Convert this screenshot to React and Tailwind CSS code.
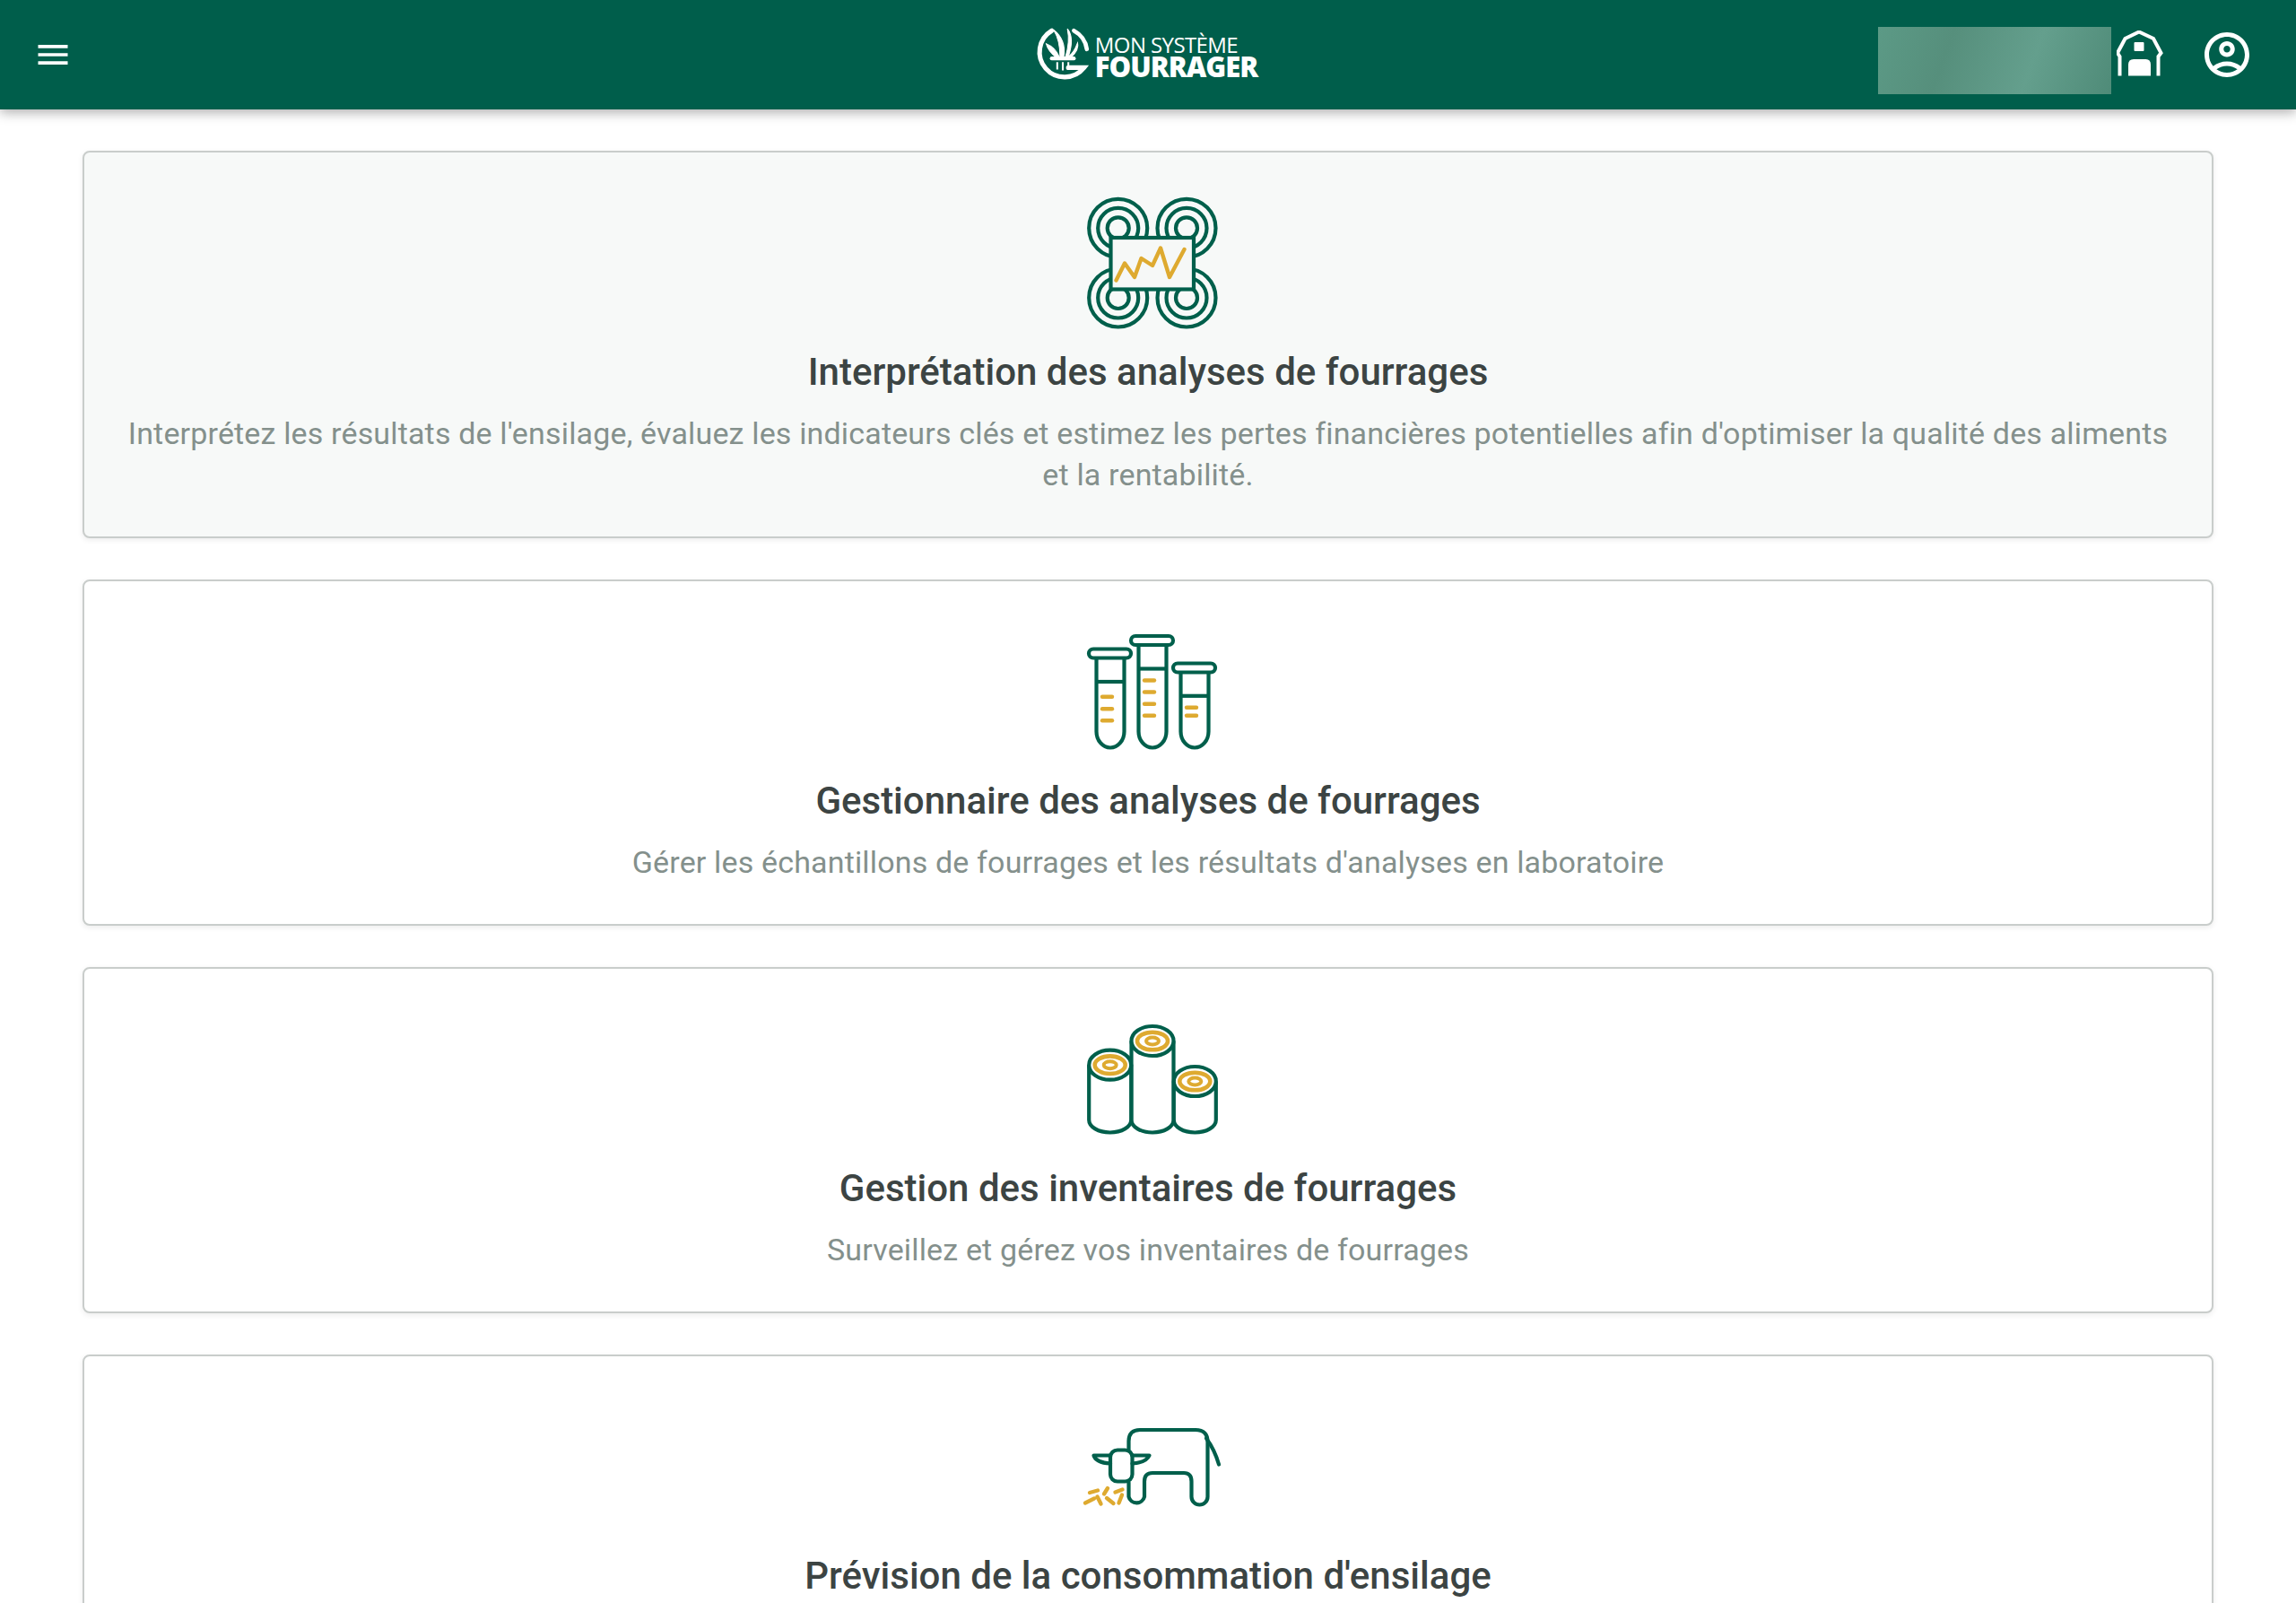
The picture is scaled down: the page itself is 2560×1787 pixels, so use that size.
const green = '#005f4b';
const gold = '#deaa30';

const FourChart = () => (
  <svg width="180" height="170" viewBox="0 -1 180 170" fill="none" stroke={green} strokeWidth="4.2">
    {[[56.7, 48.3], [133, 48.3], [56.7, 126], [133, 126]].map(([cx, cy]) => (
      <g key={`${cx}-${cy}`}>
        <circle cx={cx} cy={cy} r="32.5" />
        <circle cx={cx} cy={cy} r="22.5" />
        <circle cx={cx} cy={cy} r="12" />
      </g>
    ))}
    <rect x="48.5" y="59" width="92.5" height="57.5" fill="#f6f8f7" />
    <polyline points="54.5,106.5 64,87.5 75,103 82.5,82 95,90 104,70.5 114,103 130.5,72" stroke={gold} strokeWidth="4.4" strokeLinecap="round" strokeLinejoin="round" />
  </svg>
);

const Tube = ({ x, capY, split, dashes }) => (
  <g>
    <rect x={x} y={capY} width="47" height="10" rx="5" />
    <path d={`M${x + 8.5} ${capY + 10}V119a15.5 18 0 0 0 31 0V${capY + 10}`} />
    <path d={`M${x + 8.5} ${split}h31`} />
    {dashes.map((y) => (
      <path key={y} d={`M${x + 15} ${y}h11`} stroke={gold} strokeWidth="4.4" strokeLinecap="round" />
    ))}
  </g>
);

const Tubes = () => (
  <svg width="180" height="170" viewBox="0 -13.5 180 170" fill="none" stroke={green} strokeWidth="4.2">
    <Tube x={24} capY={27} split={63.5} dashes={[80.3, 93.7, 106.7]} />
    <Tube x={71} capY={12.5} split={49} dashes={[62, 75, 88.3, 101.3]} />
    <Tube x={118} capY={43} split={79.3} dashes={[92.3, 101.3]} />
  </svg>
);

const Log = ({ cx, cy }) => (
  <g>
    <path d={`M${cx - 23.5} ${cy}V118a23.5 14 0 0 0 47 0V${cy}`} fill="#fff" />
    <ellipse cx={cx} cy={cy} rx="23.5" ry="16.5" fill="#fff" />
    <ellipse cx={cx} cy={cy} rx="17" ry="9.8" stroke={gold} strokeWidth="4.6" />
    <ellipse cx={cx} cy={cy} rx="7" ry="4" stroke={gold} strokeWidth="4" />
  </g>
);

const Logs = () => (
  <svg width="180" height="170" viewBox="0 -15.5 180 170" fill="none" stroke={green} strokeWidth="4.2">
    <Log cx={95} cy={30} />
    <Log cx={47.7} cy={56.7} />
    <Log cx={142.3} cy={75} />
  </svg>
);

const Cow = () => (
  <svg width="180" height="170" viewBox="0 -28.5 180 170" fill="none" stroke={green} strokeWidth="4.2" strokeLinecap="round" strokeLinejoin="round">
    <path d="M68.5 41V31Q68.5 18.5 81 18.5H143Q156.5 18.5 156.5 32V93a9 9 0 0 1-18 0V76Q138.5 66.5 130 66.5H95Q86 66.5 86 76V93a9 9 0 0 1-17.5 0V77" />
    <path d="M155 28Q164 40 169 57" />
    <rect x="48" y="41" width="24.5" height="35" rx="8" />
    <path d="M48 47H29.5Q32 55 48 56M72.5 47H91.5Q88 55 72.5 56" />
    <g stroke={gold} strokeWidth="4.4">
      <path d="M25 88.5L34 86M20 100L30 95M33.5 93L37.5 101M41 90L45 83.5M44 94.5L51.5 100.5M53.500 88L61.500 85M57.500 100L61 91" />
    </g>
  </svg>
);

const Barn = () => (
  <svg width="52" height="52" viewBox="0 0 52 52" fill="none" className="block">
    <path d="M3.500 50.500V29L1 25L9.500 9L25 1.500L41 9L49.500 25L46.500 29V50.500" stroke="#fff" strokeWidth="4" />
    <path d="M13 50.500V38Q13 32 19 32H32.500Q38 32 38 38V50.500Z" fill="#fff" />
    <rect x="19.500" y="13" width="11" height="10" rx="1" fill="#fff" />
  </svg>
);

const Logo = () => (
  <div className="flex items-center gap-[3px] ml-[4px]">
    <svg width="66" height="66" viewBox="0 0 64 64" fill="none" stroke="#fff">
      <path d="M20 6A27 27 0 1 0 55 46L38 46" strokeWidth="5" strokeLinecap="round" />
      <path d="M44 6A27 27 0 0 1 58 26" strokeWidth="4.500" strokeLinecap="round" />
      <path d="M20 36h24" strokeWidth="4" strokeLinecap="round" />
      <path d="M26 40v8M32 40v9M38 40v8" strokeWidth="2" />
      <path d="M29 34Q29 16 22 5Q36 16 33 34ZM35 34Q40 18 37 4Q45 14 38 34Z" fill="#fff" strokeWidth="1" />
      <path d="M28 34Q24 24 14 20Q16 28 25 35M38 34Q44 30 48 19Q50 26 41 35" fill="#fff" strokeWidth="1" />
    </svg>
    <div className="flex flex-col text-white mt-[3px] font-['Open_Sans',sans-serif]">
      <span className="text-[24px] leading-[22px] tracking-[-0.6px]">MON SYSTÈME</span>
      <span className="text-[31px] leading-[26px] font-extrabold tracking-[-1px]">FOURRAGER</span>
    </div>
  </div>
);

const Header = () => (
  <header className="h-[122px] shrink-0 bg-[#005e4b] grid grid-cols-[1fr_auto_1fr] items-center pl-[37px] pr-[47px] shadow-[0_4px_12px_rgba(0,0,0,0.3)] relative z-10">
    <svg width="44" height="44" viewBox="0 0 24 24" fill="#fff">
      <path d="M3 18h18v-2H3v2zm0-5h18v-2H3v2zm0-5h18V6H3v2z" />
    </svg>
    <Logo />
    <div className="flex items-center justify-end">
      <div className="w-[260px] h-[75px] mt-[13px] bg-[linear-gradient(110deg,#5c9a86_0%,#568f7c_30%,#649f8d_65%,#4f8b78_100%)]" />
      <div className="ml-[6px] mr-[41px] mt-[-3px]"><Barn /></div>
      <svg width="60" height="60" viewBox="0 0 24 24" fill="#fff">
        <path d="M12 2C6.480 2 2 6.480 2 12s4.480 10 10 10 10-4.480 10-10S17.520 2 12 2zM7.350 18.500C8.660 17.560 10.260 17 12 17s3.340.56 4.650 1.500c-1.310.94-2.910 1.500-4.650 1.500s-3.340-.56-4.650-1.500zm10.790-1.380C16.450 15.800 14.320 15 12 15s-4.450.8-6.140 2.120C4.700 15.730 4 13.950 4 12c0-4.420 3.580-8 8-8s8 3.580 8 8c0 1.950-.7 3.730-1.860 5.120zM12 6c-1.930 0-3.500 1.570-3.500 3.500S10.070 13 12 13s3.500-1.570 3.500-3.500S13.930 6 12 6zm0 5c-.83 0-1.500-.67-1.500-1.500S11.170 8 12 8s1.500.67 1.500 1.500S12.830 11 12 11z" />
      </svg>
    </div>
  </header>
);

const Card = ({ icon, title, text, active }) => (
  <div className={`${active ? 'bg-[#f7f9f8]' : 'bg-white'} border-2 border-[#c9cdcb] rounded-[8px] shadow-[0_2px_6px_rgba(0,0,0,0.08)] pt-[35px] pb-[46px] px-[40px] flex flex-col items-center shrink-0`}>
    {icon}
    <h2 className="mt-[10px] text-[42px] leading-[60px] font-medium text-[#3c4443]">{title}</h2>
    {text && <p className="mt-[15px] text-[34px] leading-[46px] tracking-[0.16px] text-[#84908c] text-center">{text}</p>}
  </div>
);

export default function App() {
  return (
    <div className="h-[1787px] overflow-hidden flex flex-col bg-white font-['Roboto',sans-serif]">
      <Header />
      <main className="flex flex-col gap-[46px] pt-[46px] px-[92px]">
        <Card
          active
          icon={<FourChart />}
          title="Interprétation des analyses de fourrages"
          text="Interprétez les résultats de l'ensilage, évaluez les indicateurs clés et estimez les pertes financières potentielles afin d'optimiser la qualité des aliments et la rentabilité."
        />
        <Card
          icon={<Tubes />}
          title="Gestionnaire des analyses de fourrages"
          text="Gérer les échantillons de fourrages et les résultats d'analyses en laboratoire"
        />
        <Card
          icon={<Logs />}
          title="Gestion des inventaires de fourrages"
          text="Surveillez et gérez vos inventaires de fourrages"
        />
        <Card icon={<Cow />} title="Prévision de la consommation d'ensilage" />
      </main>
    </div>
  );
}
